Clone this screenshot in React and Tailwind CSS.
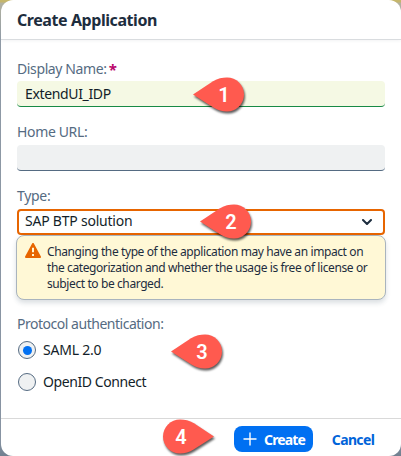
const labelClass = "block h-5 text-[14px] leading-5 text-[#556b82] whitespace-nowrap";

function Callout({ number, className, right = false }) {
  return (
    <div className={`absolute ${className}`}>
      <svg width="60" height="44" viewBox="0 0 60 44" className="overflow-visible drop-shadow-[1px_2px_1px_rgba(0,0,0,0.65)]">
        <path
          transform={right ? "translate(60 0) scale(-1 1)" : undefined}
          d="M3 21.5 L23 8.3 C28 5.2 32 4.5 37 4.5 A17 17 0 0 1 37 38.5 C32 38.5 28 37.3 23 34.2 Z"
          fill="#ff5a4f"
        />
      </svg>
      <span className={`absolute top-[10px] w-5 text-center font-['Roboto',sans-serif] text-[20px] leading-6 font-semibold text-white ${right ? "left-[14px]" : "left-[24px]"}`}>
        {number}
      </span>
    </div>
  );
}

function Radio({ checked }) {
  return (
    <span className="flex size-[18px] items-center justify-center rounded-full border border-[#556b82] bg-[#eff1f2]">
      {checked && <span className="size-[9px] rounded-full bg-[#0070f2]" />}
    </span>
  );
}

export default function App() {
  return (
    <div className="relative h-[456px] w-[401px] overflow-hidden bg-[linear-gradient(#c5b66b_0,#c5b66b_2px,#b3b2a0_3px,#8f9aa6_40px,#8793a2_440px,#708090)] pl-px font-['Noto_Sans',sans-serif] text-[#131e29]">
      <main className="flex h-[456px] flex-col overflow-hidden rounded-[12px] bg-white">
        <header className="h-10 shrink-0 border-b border-[#d9dcdf] pl-4 shadow-[0_1px_3px_rgba(34,53,72,0.06)]">
          <h1 className="pt-2 text-[16px] leading-6 font-bold tracking-[-0.43px] text-[#1d2d3e]">Create Application</h1>
        </header>
        <section className="flex h-[378px] shrink-0 flex-col px-4 pt-[18px]">
          <label className={`${labelClass} tracking-[-0.38px]`}>
            Display Name:<span className="relative top-px ml-[2px] text-[15px] font-bold text-[#ba066c]">*</span>
          </label>
          <div className="mt-[3px] h-[26px] rounded-[4px] border-b border-[#188a45] bg-[#f5f9e4] pl-2 text-[14px] leading-[26px] tracking-[-0.35px]">ExtendUI_IDP</div>
          <label className={`${labelClass} mt-[15px] tracking-[-0.35px]`}>Home URL:</label>
          <div className="mt-[3px] h-[26px] rounded-[4px] border-b border-[#556b82] bg-[#eff1f2]" />
          <label className={`${labelClass} mt-[15px] tracking-[-0.3px]`}>Type:</label>
          <div className="mt-[3px] flex h-[26px] items-center justify-between rounded-[4px] border-2 border-[#e76500] pr-[11px] pl-1.5">
            <span className="relative -top-px text-[14px] leading-5 tracking-[-0.22px]">SAP BTP solution</span>
            <svg width="10" height="6" viewBox="0 0 10 6" fill="none" stroke="#1d2d3e" strokeWidth="2" strokeLinecap="round" strokeLinejoin="round">
              <path d="m1 1 4 4 4-4" />
            </svg>
          </div>
          <div className="-mx-px flex h-[65px] rounded-[8px] border border-[#a9b4be] bg-[#fff8d6] pt-2.5 pl-2 shadow-[0_3px_5px_rgba(34,53,72,0.16)]">
            <svg width="16" height="15" viewBox="0 0 16 15" className="-mt-[3px] shrink-0">
              <path d="M8 1 15 14H1Z" fill="#e76500" stroke="#e76500" strokeWidth="2" strokeLinejoin="round" />
              <path d="M8 4.8v4.5M8 11v2" stroke="#fff8d6" strokeWidth="2" />
            </svg>
            <p className="-mt-[2px] ml-1.5 text-[12px] leading-4 tracking-[-0.4px] whitespace-nowrap text-[#1d2d3e]">
              Changing the type of the application may have an impact on<br />
              the categorization and whether the usage is free of license or<br />
              subject to be charged.
            </p>
          </div>
          <div className={`${labelClass} mt-[14px] tracking-[-0.48px]`}>Protocol authentication:</div>
          <div className="mt-[7px] ml-[1px] flex h-[18px] items-center gap-[7px]">
            <Radio checked />
            <span className="text-[14px] leading-5 tracking-[-0.22px]">SAML 2.0</span>
          </div>
          <div className="mt-[14px] ml-[1px] flex h-[18px] items-center gap-[7px]">
            <Radio />
            <span className="text-[14px] leading-5 tracking-[-0.42px]">OpenID Connect</span>
          </div>
        </section>
        <footer className="flex h-[38px] shrink-0 justify-end border-t border-[#d9d9d9] pt-[7px] pr-[26px]">
          <button className="flex h-[26px] w-[79px] items-center rounded-[8px] bg-[#0070f2] pl-[9px] text-[14px] font-bold tracking-[-0.85px] text-white">
            <svg width="14" height="14" viewBox="0 0 14 14" className="mr-[7px]" stroke="currentColor" strokeWidth="1.4">
              <path d="M7 .5v13M.5 7h13" />
            </svg>
            Create
          </button>
          <button className="ml-[18px] h-[26px] w-[44px] text-[14px] font-bold tracking-[-0.65px] text-[#0064d9]">Cancel</button>
        </footer>
      </main>
      <Callout number="1" className="top-[73px] left-[190px]" />
      <Callout number="2" className="top-[200px] left-[197px]" />
      <Callout number="3" className="top-[330px] left-[168px]" />
      <Callout number="4" className="top-[415px] left-[157px]" right />
    </div>
  );
}
